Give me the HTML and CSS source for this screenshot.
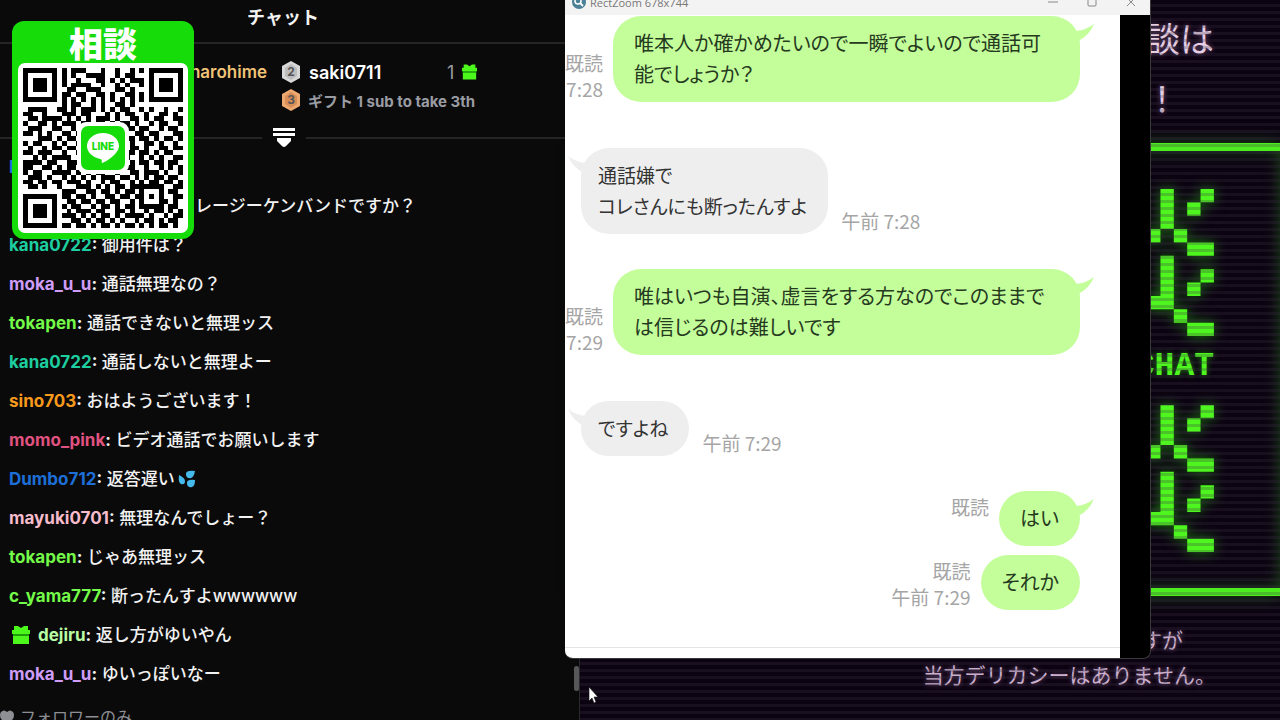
FILE: index.html
```html
<!DOCTYPE html>
<html lang="ja">
<head>
<meta charset="utf-8">
<title>チャット</title>
<link rel="stylesheet" href="styles.css">
</head>
<body>
<svg class="defs" aria-hidden="true">
  <symbol id="gift" viewBox="0 0 18 18"><path fill="currentColor" d="M2 0h4l3 2 3-2h4v4h2v4H0V4h2zM1 8h16v10H1z"/><path fill="#1f9c0c" d="M1 8h16v2H1z"/></symbol>
  <symbol id="glyph" viewBox="0 0 5 11"><path fill="#4ef51e" d="M1 0h1v3H1zM4 0h1v1H4zM3 1h1v1H3zM0 3h1v1H0zM2 3h1v1H2zM3 4h2v1H3zM1 5h1v4H0V8h1zM4 6h1v1H4zM3 7h1v1H3zM2 9h1v1H2zM3 10h2v1H3z"/></symbol>
  <symbol id="tail" viewBox="0 0 24 20"><path fill="currentColor" d="M0 6Q10 11 24 1Q19 13 8 18L0 20z"/></symbol>
</svg>
<main class="stage">
  <section class="chat">
    <h1 class="chat-title">チャット</h1>
    <div class="ranks">
      <span class="first">narohime</span>
      <svg class="hex" viewBox="0 0 20 22"><path fill="#d8d8d8" d="M10 0l9 5v12l-9 5-9-5V5z"/><path fill="#bdbdbd" d="M10 3l6 4v8l-6 4-6-4V7z"/><text x="10" y="15" text-anchor="middle">2</text></svg>
      <span class="second">saki0711</span>
      <span class="count">1</span>
      <svg class="gift"><use href="#gift"/></svg>
      <svg class="hex third" viewBox="0 0 20 22"><path fill="#eda970" d="M10 0l9 5v12l-9 5-9-5V5z"/><path fill="#d98e58" d="M10 3l6 4v8l-6 4-6-4V7z"/><text x="10" y="15" text-anchor="middle">3</text></svg>
      <span class="take">ギフト 1 sub to take 3th</span>
    </div>
    <div class="divider"><button class="collapse" aria-label="ランキング"><svg viewBox="0 0 22 20"><path fill="#fff" d="M0 0h22v3H0zM0 5h22v3H0zM4 10h14v3l-5 5q-2 2-4 0l-5-5z"/></svg></button></div>
    <ul class="messages">
      <li><b class="c-blue">Dumbo712</b>: はい</li>
      <li class="cont">レージーケンバンドですか？</li>
      <li><b class="c-teal">kana0722</b><b>:</b> 御用件は？</li>
      <li><b class="c-violet">moka_u_u</b><b>:</b> 通話無理なの？</li>
      <li><b class="c-green">tokapen</b><b>:</b> 通話できないと無理ッス</li>
      <li><b class="c-teal">kana0722</b><b>:</b> 通話しないと無理よー</li>
      <li><b class="c-orange">sino703</b><b>:</b> おはようございます！</li>
      <li><b class="c-rose">momo_pink</b><b>:</b> ビデオ通話でお願いします</li>
      <li><b class="c-blue">Dumbo712</b><b>:</b> 返答遅い<svg class="sweat" viewBox="0 0 18 18"><path fill="#45b9ec" d="M17 1Q7 0 8 5q1 4 5 3 3-1 4-7zM1 5q-1 8 2 9 4 1 4-3 0-3-6-6zM17 10q-9-1-8 4 1 4 5 3 3-1 3-7z"/></svg></li>
      <li><b class="c-pink">mayuki0701</b><b>:</b> 無理なんでしょー？</li>
      <li><b class="c-green">tokapen</b><b>:</b> じゃあ無理ッス</li>
      <li><b class="c-green">c_yama777</b><b>:</b> 断ったんすよwwwwww</li>
      <li><svg class="gift badge"><use href="#gift"/></svg><b class="c-mint">dejiru</b><b>:</b> 返し方がゆいやん</li>
      <li><b class="c-violet">moka_u_u</b><b>:</b> ゆいっぽいなー</li>
    </ul>
    <p class="followers"><svg viewBox="0 0 14 14"><path fill="currentColor" d="M7 14L1 9Q-1 5 1 2 4-1 7 2q3-3 6 0 2 3 0 7z"/></svg>フォロワーのみ</p>
    <div class="thumb"></div>
  </section>

  <section class="retro">
    <div class="retro-top"><p>談は</p><p class="shout">い！</p></div>
    <div class="retro-mid">
      <svg class="glyph"><use href="#glyph"/></svg>
      <p>CHAT</p>
      <svg class="glyph"><use href="#glyph"/></svg>
    </div>
    <div class="retro-bottom"><p class="short">すが</p><p>当方デリカシーはありません。</p></div>
  </section>

  <section class="window">
    <header class="bar">
      <svg class="app" viewBox="0 0 14 14"><circle cx="7" cy="7" r="7" fill="#4b8096"/><circle cx="6" cy="6" r="3" fill="none" stroke="#fff" stroke-width="1.5"/><path stroke="#fff" stroke-width="1.8" d="M8 8l3 3"/></svg>
      <span class="name">RectZoom 678x744</span>
      <button aria-label="最小化"><svg viewBox="0 0 10 10"><path d="M0 5h10"/></svg></button>
      <button aria-label="最大化"><svg viewBox="0 0 10 10"><rect x="1" y="1" width="8" height="8" rx="1"/></svg></button>
      <button aria-label="閉じる"><svg viewBox="0 0 10 10"><path d="M1 1l8 8M9 1L1 9"/></svg></button>
    </header>
    <div class="view">
      <div class="line">
        <div class="row mine"><p class="meta">既読<br>7:28</p><p class="bubble wide">唯本人か確かめたいので一瞬でよいので通話可<br>能でしょうか？<svg class="tail"><use href="#tail"/></svg></p></div>
        <div class="row theirs far"><p class="bubble">通話嫌で<br>コレさんにも断ったんすよ<svg class="tail"><use href="#tail"/></svg></p><p class="meta">午前 7:28</p></div>
        <div class="row mine mid"><p class="meta">既読<br>7:29</p><p class="bubble wide">唯はいつも自演、虚言をする方なのでこのままで<br>は信じるのは難しいです<svg class="tail"><use href="#tail"/></svg></p></div>
        <div class="row theirs far"><p class="bubble">ですよね<svg class="tail"><use href="#tail"/></svg></p><p class="meta">午前 7:29</p></div>
        <div class="row mine mid top"><p class="meta">既読</p><p class="bubble">はい<svg class="tail"><use href="#tail"/></svg></p></div>
        <div class="row mine near"><p class="meta">既読<br>午前 7:29</p><p class="bubble">それか</p></div>
        <div class="compose"></div>
      </div>
    </div>
  </section>

  <aside class="qr-card">
    <h2>相談</h2>
    <div class="qr">
      <svg viewBox="0 0 33 33" shape-rendering="crispEdges"><path id="modules" fill="#000"/></svg>
      <svg class="logo" viewBox="0 0 52 52"><rect width="52" height="52" rx="9" fill="#fff"/><rect x="4" y="4" width="44" height="44" rx="7" fill="#16dc0a"/><path fill="#fff" d="M26 11c-9 0-16 6-16 13 0 6 5 11 13 13 3 0 1 3 2 4 2 0 17-9 17-17 0-7-7-13-16-13z"/><text x="26" y="28" text-anchor="middle">LINE</text></svg>
    </div>
  </aside>

  <svg class="cursor" viewBox="0 0 10 18"><path fill="#fff" stroke="#111" stroke-width=".6" d="M1 1v14l3-3 2 5 2-1-2-5h4z"/></svg>
</main>
<script src="qr.js"></script>
</body>
</html>
```
FILE: qr.js
```js
const rows = [
  '111111101011100010010010110111111',
  '100000101010011110010110010100001',
  '101110101001000110101011110101110',
  '101110101011110010010100100101110',
  '101110100110011100011010010101110',
  '100000101101100110100110110100001',
  '111111101010101010101010101111111',
  '000000001011001010011010000000000',
  '011110011010111010101100101001001',
  '110010001110110001010110010011010',
  '011011110101010111010011010110011',
  '100110101110110110101101001011001',
  '011100110010010011110110110010110',
  '110101001101110110001001101100011',
  '000111010110101001110110110101101',
  '101100101001100110011010011010010',
  '010010110110010001110011010011011',
  '110111001001011101000110110101100',
  '001010111100110110110100101010011',
  '111101100111001001011010110110110',
  '110011010110110101110110010010101',
  '101100111101010110010011011101001',
  '011101001010101011101101010110110',
  '110110110111010010110010101101101',
  '011010010001110101011011111110011',
  '000000001110011011010110100010110',
  '111111101101101001101101101010011',
  '100000100110110110110010100011010',
  '101110101011001011010110111110110',
  '101110100101110110011010010110101',
  '101110101110101011010111101001011',
  '100000100011010110101001011010110',
  '111111101101101011010110101011010'
].map(r => r.split(''));

// Restore the three position markers on top of the data modules.
for (const [top, left] of [[0, 0], [0, 26], [26, 0]]) {
  for (let y = -1; y < 8; y++) {
    for (let x = -1; x < 8; x++) {
      const row = rows[top + y];
      if (!row || row[left + x] === undefined) continue;
      const ring = Math.max(Math.abs(x - 3), Math.abs(y - 3));
      row[left + x] = ring === 3 || ring < 2 ? '1' : '0';
    }
  }
}

document.getElementById('modules').setAttribute('d', rows.map((row, y) =>
  row.map((cell, x) => cell === '1' ? `M${x} ${y}h1v1h-1z` : '').join('')).join(''));
```
FILE: styles.css
```css
* { box-sizing: border-box; }
body, h1, h2, p, ul { margin: 0; padding: 0; }
body { background: #000; font-family: Inter, "Noto Sans CJK JP", sans-serif; }
button { border: 0; padding: 0; background: none; }
.defs { position: absolute; width: 0; height: 0; }
.stage { position: relative; display: grid; grid-template-columns: 580px 1fr; height: 100vh; overflow: hidden; }

.chat { position: relative; background: #0a0a0b; border-right: 1px solid #2a2a2d; color: #f2f2f2; overflow: hidden; }
.chat-title { width: 566px; height: 44px; line-height: 36px; border-bottom: 2px solid #252528; font-size: 18px; text-align: center; }
.ranks { display: grid; grid-template-columns: 274px 20px 132px 8px 16px; grid-template-rows: 28px 28px; align-items: center; column-gap: 7px; padding-top: 14px; font-size: 18px; font-weight: 600; }
.first { padding-right: 7px; font-size: 17px; color: #f1c376; text-align: right; }
.second { padding-left: 1px; color: #fff; }
.count { color: #9a9ca3; font-weight: 400; }
.take { grid-column: 3 / 6; font-size: 15px; font-weight: 700; color: #9a9ca3; white-space: nowrap; }
.hex { width: 20px; height: 22px; font: 700 12px Inter, sans-serif; }
.hex text { fill: #555; }
.third { grid-column: 2; }
.gift { width: 15px; height: 16px; color: #4cf71c; }
.badge { width: 18px; height: 18px; margin: 0 8px 0 3px; vertical-align: -3px; }
.divider { display: flex; align-items: center; width: 566px; height: 48px; padding-bottom: 10px; margin-top: 5px; }
.divider::before, .divider::after { content: ""; height: 2px; background: #252528; }
.divider::before { width: 262px; }
.divider::after { flex: 1; }
.collapse { width: 44px; height: 20px; }
.collapse svg { width: 22px; height: 20px; }
.messages { list-style: none; padding: 0 9px; margin-top: -19px; font-size: 17px; font-weight: 500; line-height: 39px; white-space: nowrap; }
.messages li { height: 39px; }
.cont { padding-left: 186px; }
.sweat { width: 18px; height: 18px; margin-left: 3px; vertical-align: -3px; }
.c-blue { color: #1d6fd8; } .c-teal { color: #1dcfa0; } .c-violet { color: #cf9df8; }
.c-green { color: #74fa48; } .c-orange { color: #f79a1c; } .c-rose { color: #e0527f; }
.c-pink { color: #f7bccb; } .c-mint { color: #b8fda4; }
.followers { display: flex; align-items: center; gap: 6px; margin-top: 11px; font-size: 16px; line-height: 24px; color: #8d8f94; }
.followers svg { width: 14px; height: 14px; }
.thumb { position: absolute; right: 0; top: 666px; width: 5px; height: 25px; border-radius: 3px; background: #57575a; }

.retro { position: relative; background: #0c0312; color: #e6cfe3; font-family: "Noto Sans CJK JP", sans-serif; text-align: right; white-space: nowrap; text-shadow: 0 0 5px #74507a; }
.retro::after { content: ""; position: absolute; inset: 0; background: repeating-linear-gradient(transparent 0 4px, rgba(60, 50, 70, .25) 4px 7px); pointer-events: none; }
.retro-top { height: 143px; padding: 8px 66px 0 0; font-size: 34px; line-height: 60px; }
.shout { padding-right: 35px; }
.retro-mid { display: flex; flex-direction: column; align-items: flex-end; height: 453px; padding: 38px 66px 0 0; border: solid #4ded20; border-width: 8px 0; box-shadow: 0 0 16px #1d4a18, inset 0 0 16px #1d4a18; }
.retro-mid p { margin: 8px 0 15px; font: 700 33px/46px "Liberation Mono", monospace; color: #4ef51e; text-shadow: 0 0 6px #1d7a10; }
.glyph { width: 67px; height: 147px; filter: drop-shadow(0 0 7px #1d7a10); }
.retro-bottom { padding: 26px 64px 0 0; font-size: 21px; line-height: 35px; color: #cbb0cd; }
.short { padding-right: 33px; }

.window { position: absolute; left: 565px; right: 129px; top: -11px; border: solid #3a3a3a; border-width: 0 1px 1px 0; border-radius: 8px; overflow: hidden; background: #000; }
.bar { display: flex; align-items: center; height: 26px; padding: 0 14px 0 7px; background: #f3f3f3; color: #777; font: 12px "Open Sans", sans-serif; }
.app { width: 14px; height: 14px; margin-right: 4px; }
.name { flex: 1; font-size: 11px; }
.bar button { width: 10px; height: 20px; margin-left: 29px; }
.bar button svg { width: 10px; height: 10px; fill: none; stroke: #888; }
.view { padding-right: 30px; }
.line { padding-top: 1px; background: #fff; color: #2b2f2b; font-family: "Noto Sans CJK JP", sans-serif; font-feature-settings: "palt"; white-space: nowrap; overflow: hidden; }
.row { display: flex; align-items: flex-end; }
.mine { justify-content: flex-end; gap: 10px; padding-right: 40px; }
.theirs { gap: 13px; padding-left: 16px; }
.far { margin-top: 46px; }
.mid { margin-top: 35px; }
.near { margin-top: 9px; }
.top { align-items: flex-start; }
.bubble { position: relative; padding: 11px 21px 13px; border-radius: 28px; font-size: 20px; line-height: 31px; background: #c4fe9b; color: #263a20; }
.theirs .bubble { padding-left: 17px; font-size: 19px; background: #eee; color: #333; }
.wide { width: 468px; }
.meta { font-size: 19px; line-height: 26px; color: #a5a5a5; text-align: right; }
.top .meta { padding-top: 3px; }
.tail { position: absolute; top: 7px; right: -14px; width: 24px; height: 20px; color: #c4fe9b; }
.theirs .tail { right: auto; left: -13px; color: #eee; transform: scaleX(-1); }
.compose { height: 11px; margin-top: 37px; border-top: 1px solid #e4e4e4; }

.qr-card { position: absolute; left: 12px; top: 21px; padding: 0 6px 6px; border-radius: 12px; background: #16dc0a; }
.qr-card h2 { height: 42px; font: 900 34px/44px "Noto Sans CJK JP", sans-serif; color: #fff; text-align: center; }
.qr { position: relative; padding: 5px; border-radius: 7px; background: #fff; }
.qr svg { display: block; width: 160px; height: 160px; }
.qr .logo { position: absolute; left: 59px; top: 59px; width: 52px; height: 52px; }
.logo text { fill: #16dc0a; font: 800 10px Inter, sans-serif; }
.cursor { position: absolute; left: 588px; top: 686px; width: 10px; height: 18px; }
```
